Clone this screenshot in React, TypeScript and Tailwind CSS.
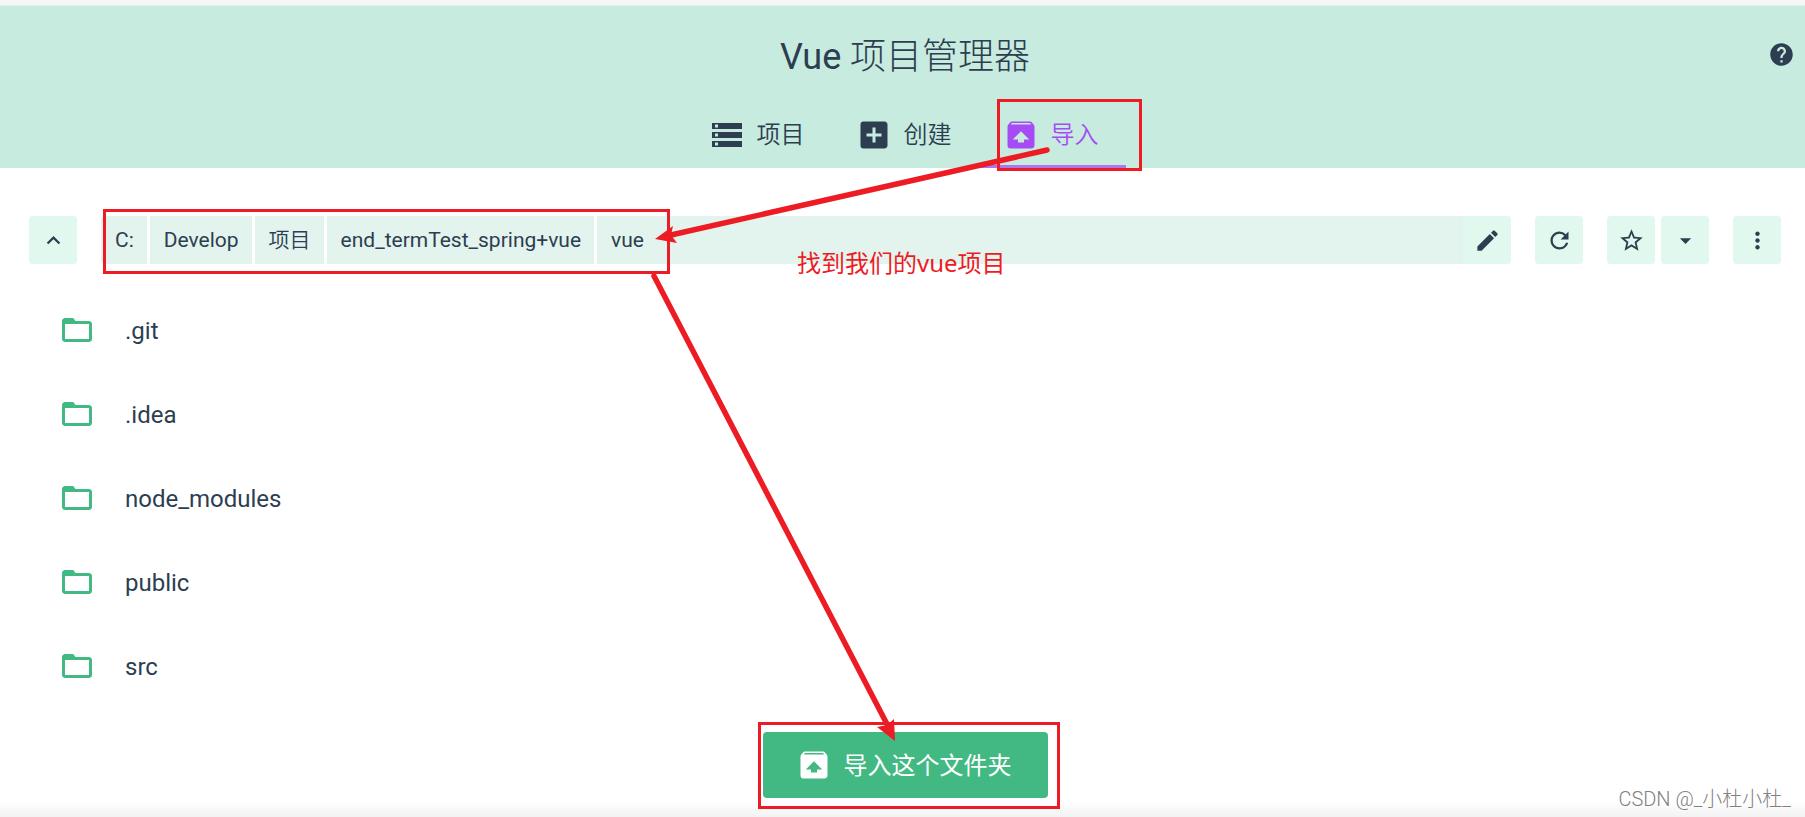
import { useState } from 'react'
import type { ReactNode } from 'react'
import {
  MdAddBox,
  MdArrowDropDown,
  MdEdit,
  MdHelp,
  MdKeyboardArrowUp,
  MdMoreVert,
  MdRefresh,
  MdStarBorder,
  MdStorage,
  MdUnarchive,
} from 'react-icons/md'

const TABS = [
  { id: 'projects', label: '项目', Icon: MdStorage },
  { id: 'create', label: '创建', Icon: MdAddBox },
  { id: 'import', label: '导入', Icon: MdUnarchive },
]

const PATH = ['C:', 'Develop', '项目', 'end_termTest_spring+vue', 'vue']

const FOLDERS = ['.git', '.idea', 'node_modules', 'public', 'src']

function FolderIcon() {
  return (
    <svg viewBox="0 0 24 24" className="size-9 shrink-0 fill-[#42b983]" aria-hidden="true">
      <path d="M20 6h-9L9.500 4H4c-1.100 0-2 .9-2 2v12c0 1.100.9 2 2 2h16c1.100 0 2-.9 2-2V8c0-1.100-.9-2-2-2zm0 12H4V8h16v10z" />
    </svg>
  )
}

function IconButton({ label, className = 'rounded', children }: { label: string; className?: string; children: ReactNode }) {
  return (
    <button type="button" aria-label={label} className={`flex size-12 shrink-0 items-center justify-center bg-[#e0f8ed] text-[27px] ${className}`}>
      {children}
    </button>
  )
}

// Red boxes and arrows walking through the import steps
function Annotations() {
  return (
    <div className="pointer-events-none absolute left-0 top-0">
      <svg width="1805" height="817" viewBox="0 0 1805 817" fill="none" stroke="#ed1c24" strokeWidth="3" aria-hidden="true">
        <rect x="998.5" y="100.5" width="142" height="69" />
        <rect x="104.5" y="210.5" width="564" height="62" />
        <rect x="759.5" y="723.5" width="299" height="84" />
        <g strokeWidth="5.5" strokeLinecap="round">
          <path d="M1047 150L671 235" />
          <path d="M654 276L888 726" />
        </g>
        <g fill="#ed1c24" stroke="none">
          <path d="M655 239L673 226L671 235L677 243Z" />
          <path d="M895 741L877 727L887 725L894 719Z" />
        </g>
      </svg>
      <p className="absolute top-[245px] left-[797px] font-['Noto_Sans','Noto_Sans_CJK_SC',sans-serif] text-2xl leading-9 whitespace-nowrap text-[#ed1c24]">找到我们的vue项目</p>
    </div>
  )
}

export default function App() {
  const [tab, setTab] = useState('import')

  return (
    <div className="relative flex min-h-screen flex-col bg-white font-[Roboto,'Noto_Sans_CJK_SC',sans-serif] text-[#2c3e50]">
      <div className="h-[6px] border-b border-[#e8eeec] bg-[#f6f6f6]" />

      <header className="relative bg-[#c8ebdf] pl-[5px]">
        <h1 className="pt-6 text-center text-4xl leading-[54px] font-light">
          <span className="font-normal">Vue</span> 项目管理器
        </h1>
        <nav className="mt-[18px] flex justify-center">
          {TABS.map(({ id, label, Icon }) => (
            <button
              key={id}
              type="button"
              onClick={() => setTab(id)}
              className={`flex h-[66px] items-center gap-3 border-b-3 pt-0.5 pr-[27px] pl-6 text-2xl font-[350] ${tab === id ? 'border-[#ae76ee] text-[#a54cf5]' : 'border-transparent'}`}
            >
              <Icon className="size-9" />
              {label}
            </button>
          ))}
        </nav>
        <button type="button" aria-label="帮助" className="absolute top-[35px] right-2.5">
          <MdHelp className="size-[27px]" />
        </button>
      </header>

      <main className="flex flex-1 flex-col px-6 pt-12 pb-[19px] pl-[29px]">
        <div className="flex gap-6">
          <IconButton label="上级文件夹"><MdKeyboardArrowUp /></IconButton>
          <div className="flex flex-1 overflow-hidden rounded text-[21px]">
            <div className="flex flex-1 gap-[3px]">
              {PATH.map((part) => (
                <button
                  key={part}
                  type="button"
                  className={`h-12 bg-[#e3f4ee] pt-0.5 pr-[13px] pl-[14px] text-left last:flex-1 ${part === '项目' ? 'font-[350]' : 'font-normal'}`}
                >
                  {part}
                </button>
              ))}
            </div>
            <IconButton label="编辑路径" className=""><MdEdit /></IconButton>
          </div>
          <IconButton label="刷新"><MdRefresh /></IconButton>
          <div className="flex gap-1.5">
            <IconButton label="收藏"><MdStarBorder /></IconButton>
            <IconButton label="收藏列表"><MdArrowDropDown /></IconButton>
          </div>
          <IconButton label="更多"><MdMoreVert /></IconButton>
        </div>

        <ul className="mt-6">
          {FOLDERS.map((name) => (
            <li key={name}>
              <button type="button" className="flex h-21 w-full items-center gap-[30px] px-[30px] text-2xl">
                <FolderIcon />
                <span className="pt-0.5">{name}</span>
              </button>
            </li>
          ))}
        </ul>

        <button type="button" className="mt-6 flex h-[66px] items-center gap-3 self-center rounded bg-[#42b983] pr-9 pl-[33px] text-2xl text-white">
          <MdUnarchive className="size-9" />
          <span className="pt-0.5">导入这个文件夹</span>
        </button>
      </main>

      <div className="pointer-events-none absolute inset-x-0 bottom-0 h-4 bg-linear-to-b from-transparent to-black/5" />
      <p className="absolute right-3.5 bottom-1 text-xl leading-7 font-light text-[#808080]">CSDN @_小杜小杜_</p>
      <Annotations />
    </div>
  )
}
